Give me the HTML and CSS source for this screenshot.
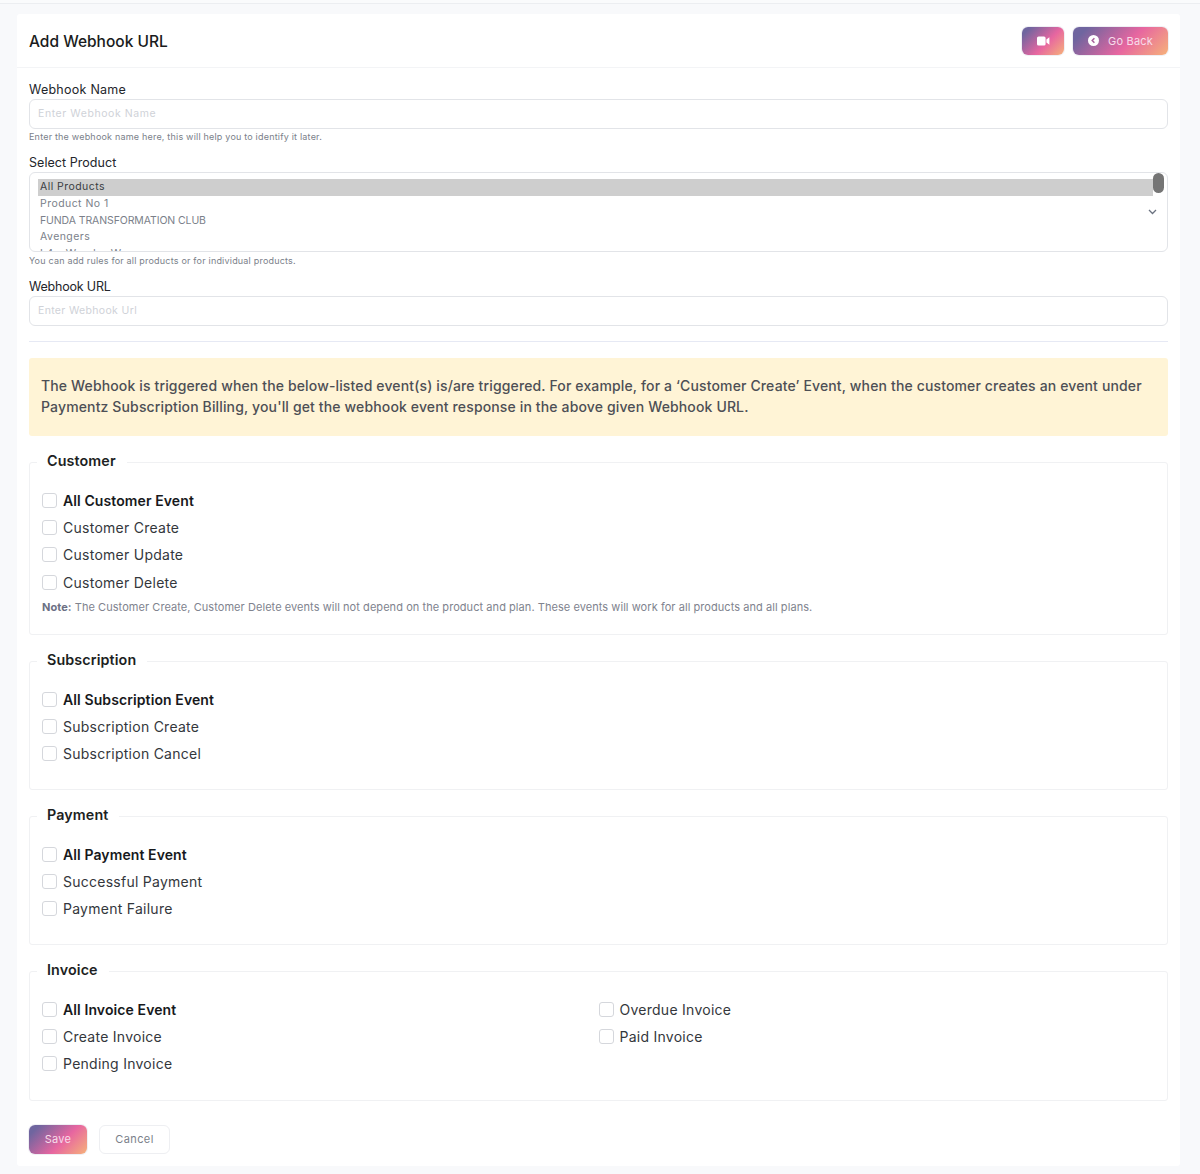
FILE: index.html
```html
<!DOCTYPE html>
<html lang="en">
<head>
<meta charset="utf-8">
<title>Add Webhook URL</title>
<link rel="stylesheet" href="styles.css">
</head>
<body>
<div class="topline"></div>
<main class="card">
  <header class="card-head">
    <h1>Add Webhook URL</h1>
    <div class="head-actions">
      <button class="btn grad icon-btn" type="button" aria-label="Video">
        <svg width="13" height="10" viewBox="0 0 13 10"><rect x="0" y="0.5" width="8.6" height="9" rx="1.6" fill="#fff"/><path d="M9.4 3.6 12.4 1.2V8.8L9.4 6.4Z" fill="#fff"/></svg>
      </button>
      <button class="btn grad back-btn" type="button">
        <svg width="11" height="11" viewBox="0 0 11 11"><circle cx="5.5" cy="5.5" r="5.5" fill="#fff"/><path d="M6.4 3.2 4.2 5.5 6.4 7.8" fill="none" stroke="#a8609c" stroke-width="1.5"/></svg>
        <span>Go Back</span>
      </button>
    </div>
  </header>
  <form class="card-body">
    <label class="lbl lbl-1">Webhook Name</label>
    <div class="input">Enter Webhook Name</div>
    <p class="hint">Enter the webhook name here, this will help you to identify it later.</p>

    <label class="lbl lbl-2">Select Product</label>
    <div class="select">
      <div class="opt sel">All Products</div>
      <div class="opt">Product No 1</div>
      <div class="opt opt-caps">FUNDA TRANSFORMATION CLUB</div>
      <div class="opt">Avengers</div>
      <div class="opt">L4 - Wonder Women</div>
      <span class="thumb"></span>
      <svg class="chev" width="9" height="6" viewBox="0 0 9 6"><path d="M1 1 4.5 4.5 8 1" fill="none" stroke="#6b7280" stroke-width="1.3"/></svg>
    </div>
    <p class="hint hint-2">You can add rules for all products or for individual products.</p>

    <label class="lbl lbl-3">Webhook URL</label>
    <div class="input input-url">Enter Webhook Url</div>
    <hr class="rule">

    <div class="alert">The Webhook is triggered when the below-listed event(s) is/are triggered. For example, for a ‘Customer Create’ Event, when the customer creates an event under Paymentz Subscription Billing, you'll get the webhook event response in the above given Webhook URL.</div>

    <section class="group g-customer">
      <h2>Customer</h2>
      <div class="check strong"><i></i>All Customer Event</div>
      <div class="check"><i></i>Customer Create</div>
      <div class="check"><i></i>Customer Update</div>
      <div class="check"><i></i>Customer Delete</div>
      <p class="note"><b>Note:</b> The Customer Create, Customer Delete events will not depend on the product and plan. These events will work for all products and all plans.</p>
    </section>

    <section class="group">
      <h2>Subscription</h2>
      <div class="check strong"><i></i>All Subscription Event</div>
      <div class="check"><i></i>Subscription Create</div>
      <div class="check"><i></i>Subscription Cancel</div>
    </section>

    <section class="group">
      <h2>Payment</h2>
      <div class="check strong"><i></i>All Payment Event</div>
      <div class="check"><i></i>Successful Payment</div>
      <div class="check"><i></i>Payment Failure</div>
    </section>

    <section class="group g-invoice">
      <h2>Invoice</h2>
      <div class="cols">
        <div>
          <div class="check strong"><i></i>All Invoice Event</div>
          <div class="check"><i></i>Create Invoice</div>
          <div class="check"><i></i>Pending Invoice</div>
        </div>
        <div>
          <div class="check"><i></i>Overdue Invoice</div>
          <div class="check"><i></i>Paid Invoice</div>
        </div>
      </div>
    </section>

    <div class="actions">
      <button class="btn grad save" type="button">Save</button>
      <button class="btn cancel" type="button">Cancel</button>
    </div>
  </form>
</main>
</body>
</html>
```
FILE: styles.css
```css
* { box-sizing: border-box; }
html, body { height: 100%; }
body {
  margin: 0;
  height: 1174px;
  overflow: hidden;
  background: #f8f9fb;
  font-family: Inter, "Noto Sans", "Liberation Sans", sans-serif;
  color: #23262b;
}
.topline { height: 4px; border-bottom: 1px solid #eceef1; background: #fafbfc; }
.card {
  margin: 10px 20px 0 17px;
  height: 1152px;
  background: #fff;
  border-radius: 3px;
}
.card-head {
  height: 54px;
  padding: 0 12px;
  display: flex;
  align-items: center;
  justify-content: space-between;
  border-bottom: 1px solid #f3f4f6;
}
h1 { margin: 2px 0 0; font-size: 15.5px; font-weight: 500; color: #1a1c20; }
.head-actions { display: flex; gap: 9px; }
.btn {
  font: inherit;
  border: 0;
  border-radius: 6px;
  display: inline-flex;
  align-items: center;
  justify-content: center;
  padding: 0;
}
.grad {
  background: linear-gradient(135deg, #6f659f 12%, #e766a0 58%, #f6b27a 100%);
  color: #f7dcea;
  box-shadow: 0 0 0 1px rgba(225, 225, 235, .55);
}
.icon-btn { width: 42px; height: 28px; }
.back-btn { width: 95px; height: 28px; gap: 9px; font-size: 11px; letter-spacing: .2px; }
.card-body { padding: 14px 12px 0; }
.lbl { display: block; font-size: 12.5px; line-height: 16px; height: 15px; color: #23262b; letter-spacing: .05px; }
.lbl-1 { letter-spacing: .25px; }
.lbl-2 { margin-top: 12px; }
.lbl-3 { margin-top: 12px; letter-spacing: -.2px; }
.input {
  margin-top: 2px;
  height: 30px;
  border: 1px solid #e2e4e8;
  border-radius: 6px;
  padding: 0 8px 2px;
  display: flex;
  align-items: center;
  font-size: 10.5px;
  letter-spacing: .58px;
  color: #cfd2d8;
  background: #fff;
}
.input-url { letter-spacing: .34px; }
.hint { margin: 2px 0 0; font-size: 9px; line-height: 12px; color: #7b7f8a; letter-spacing: .2px; }
.hint-2 { margin-top: 3px; }
.select {
  position: relative;
  margin-top: 2px;
  height: 80px;
  border: 1px solid #e2e4e8;
  border-radius: 6px;
  overflow: hidden;
  padding: 6px 9px 0 8px;
  font-size: 10.5px;
  letter-spacing: .45px;
  color: #7b7f8a;
}
.opt { height: 16.8px; line-height: 16.8px; padding-left: 2px; white-space: nowrap; margin-right: 5px; }
.opt-caps { letter-spacing: -.1px; }
.opt.sel { background: #cecece; color: #3a3d42; }
.thumb {
  position: absolute;
  top: 0;
  right: 3px;
  width: 11px;
  height: 20px;
  border-radius: 6px;
  background: #757575;
}
.chev { position: absolute; right: 10px; top: 36px; }
.rule { margin: 15px 0 16px; border: 0; border-top: 1px solid #e6e9f4; }
.alert {
  background: #fff4d6;
  border-radius: 3px;
  height: 78px;
  padding: 17px 12px 0;
  font-size: 14px;
  font-weight: 500;
  line-height: 21px;
  letter-spacing: .14px;
  color: #4d4f55;
}
.group {
  position: relative;
  margin-top: 26px;
  height: 129px;
  border: 1px solid #f0f1f3;
  border-radius: 3px;
  padding: 23.5px 12px 0;
}
.g-customer { height: 173px; }
.g-invoice { height: 130px; }
.group h2 {
  position: absolute;
  top: -12px;
  left: 7px;
  margin: 0;
  padding: 0 11px 0 10px;
  background: #fff;
  font-size: 14.3px;
  line-height: 20px;
  font-weight: 600;
  letter-spacing: .12px;
  color: #1d1f23;
}
.check {
  display: flex;
  align-items: center;
  height: 27.3px;
  font-size: 14px;
  letter-spacing: .26px;
  color: #34373c;
}
.check i {
  flex: none;
  width: 15px;
  height: 15px;
  margin-right: 6px;
  border: 1px solid #d5d7dc;
  border-radius: 3px;
  background: #fff;
}
.strong { font-weight: 600; color: #17191c; letter-spacing: .1px; }
.note { margin: 4px 0 0; font-size: 11px; line-height: 14px; letter-spacing: .06px; color: #80838e; }
.note b { font-weight: 700; color: #6c7084; }
.cols { display: grid; grid-template-columns: 556.5px 1fr; }
.actions { display: flex; gap: 12px; margin-top: 24px; }
.save { width: 58px; height: 29px; font-size: 11px; letter-spacing: .3px; padding-bottom: 2px; }
.cancel {
  width: 71px;
  height: 29px;
  font-size: 11px;
  letter-spacing: .4px;
  padding-bottom: 2px;
  color: #7b7f8a;
  background: #fff;
  border: 1px solid #eeeff2;
}
```
